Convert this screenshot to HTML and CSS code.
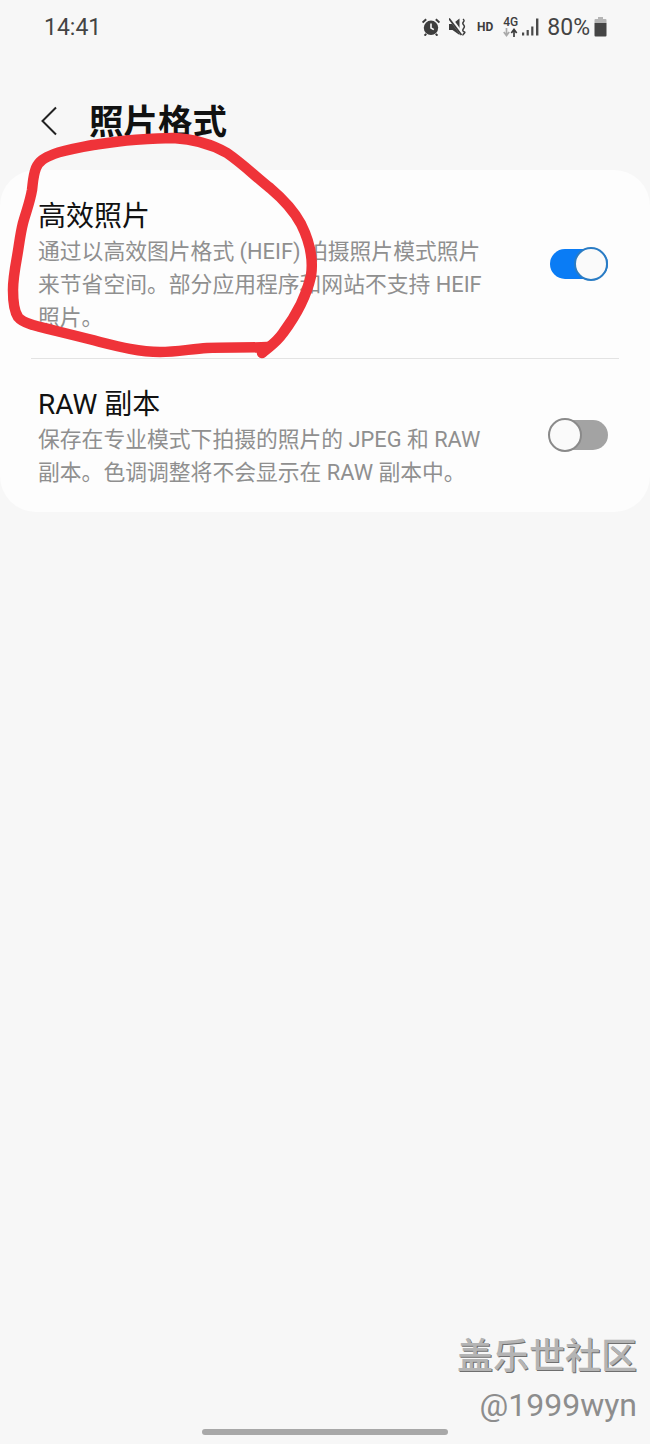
FILE: index.html
```html
<!DOCTYPE html>
<html lang="zh-CN">

<head>
    <meta charset="UTF-8">
    <meta name="viewport" content="width=device-width, initial-scale=1.0">
    <title>照片格式</title>
    <link rel="stylesheet" href="styles.css">
</head>

<body>
    <div class="page">
        <!-- status bar -->
        <div class="status-bar">
            <span class="time">14:41</span>
            <div class="status-icons">
                <svg class="ic-alarm" width="18" height="18" viewBox="0 0 18 18">
                    <circle cx="9" cy="9.8" r="7.200" fill="#3d3d3d"/>
                    <path d="M9 5.500v4.500l2.800 1.600" fill="none" stroke="#f7f7f7" stroke-width="1.600"/>
                    <path d="M.6 4.600 4.200 1.200M17.400 4.600 13.800 1.200M4.200 15.800l-1.600 1.900M13.800 15.800l1.600 1.900" stroke="#3d3d3d" stroke-width="2" fill="none"/>
                </svg>
                <svg class="ic-mute" width="18" height="18" viewBox="0 0 18 18">
                    <path d="M0 6h3.500L10.500 .5v16.500L3.500 12H0z" fill="#3d3d3d"/>
                    <path d="M1 0 13 16" stroke="#f7f7f7" stroke-width="3.600"/>
                    <path d="M0 .5 12.500 17" stroke="#3d3d3d" stroke-width="1.800"/>
                    <path d="M14 1c3 2.500-1.500 3 0 5s2 2.500 .5 4.500-.5 3 1 3.500-2 2-1.500 3.500" fill="none" stroke="#3d3d3d" stroke-width="1.500"/>
                </svg>
                <span class="hd">HD</span>
                <div class="net">
                    <span class="net-label">4G</span>
                    <svg width="15" height="9" viewBox="0 0 15 9">
                        <path d="M3.500 0v6M.8 4l2.700 3.500L6.200 4" fill="none" stroke="#aaa" stroke-width="1.700"/>
                        <path d="M11 9V2.500M8.300 5 11 1.500 13.700 5" fill="none" stroke="#3d3d3d" stroke-width="1.700"/>
                    </svg>
                </div>
                <svg class="ic-signal" width="17" height="18" viewBox="0 0 17 18">
                    <path d="M0 14.500h2.200v3H0zM4.600 12h2.200v5.500H4.600zM9.200 8.500h2.200v9H9.200zM14 .5h2.400v17H14z" fill="#4a4a4a"/>
                </svg>
                <span class="pct">80%</span>
                <svg width="13" height="20" viewBox="0 0 13 20">
                    <path d="M4 0h5v2H4z" fill="#b5b5b5"/>
                    <path d="M1.500 2h10a1 1 0 0 1 1 1v3H.5V3a1 1 0 0 1 1-1z" fill="#b5b5b5"/>
                    <path d="M.5 6h12v12.500a1 1 0 0 1-1 1h-10a1 1 0 0 1-1-1z" fill="#454545"/>
                </svg>
            </div>
        </div>

        <div class="header">
            <svg class="back" width="16" height="30" viewBox="0 0 16 30">
                <path d="M15 1.500 1.500 15 15 28.500" fill="none" stroke="#222" stroke-width="2"/>
            </svg>
            <h1 class="title">照片格式</h1>
        </div>

        <div class="card">
            <div class="row row-first">
                <div class="row-text">
                    <h2 class="row-title">高效照片</h2>
                    <p class="row-desc">通过以高效图片格式 (HEIF) 拍摄照片模式照片来节省空间。部分应用程序和网站不支持 HEIF 照片。</p>
                </div>
                <span class="toggle on"><span class="thumb"></span></span>
            </div>
            <div class="divider"></div>
            <div class="row row-second">
                <div class="row-text">
                    <h2 class="row-title">RAW 副本</h2>
                    <p class="row-desc">保存在专业模式下拍摄的照片的 JPEG 和 RAW 副本。色调调整将不会显示在 RAW 副本中。</p>
                </div>
                <span class="toggle off"><span class="thumb"></span></span>
            </div>
        </div>

        <div class="bottom">
            <div class="watermark">
                <div class="wm-name">盖乐世社区</div>
                <div class="wm-user">@1999wyn</div>
            </div>
            <div class="home-bar"></div>
        </div>

        <!-- red marker scribble drawn over the screenshot -->
        <svg class="scribble" width="650" height="400" viewBox="0 0 650 400">
            <path d="M262 353C270 346 276 343 283 333C295 317 306 298 311 276C314 256 309 240 301 224C293 209 283 199 270 188C256 177 243 164 227 153C213 145 195 139 173 138C160 138 147 139 133 140C120 141 107 143 93 145C78 148 64 150 54 154C44 158 39 161 36 168C33 176 33 182 32 190C30 202 26 212 23 223C20 235 19 246 17 257C15 268 13 279 13 290C13 302 14 311 18 317C22 322 27 323 33 325C55 331 78 336 100 342C120 347 140 352 160 352C176 352 191 349 207 348C225 347 247 348 267 347" fill="none" stroke="#ef3339" stroke-width="10.500" stroke-linecap="round" stroke-linejoin="round"/>
        </svg>
    </div>
</body>

</html>
```

FILE: styles.css
```css
* {
    box-sizing: border-box;
}

body {
    margin: 0;
    background-color: #f7f7f7;
    font-family: Roboto, "Noto Sans CJK SC", sans-serif;
}

.page {
    position: relative;
    display: flex;
    flex-direction: column;
    width: 650px;
    height: 1444px;
    overflow: hidden;
}

.status-bar {
    display: flex;
    justify-content: space-between;
    align-items: center;
    height: 54px;
    padding: 0 43px 0 44px;
}

.time {
    font-size: 23px;
    color: #444;
}

.status-icons {
    display: flex;
    align-items: center;
}

.ic-alarm {
    margin-right: 9px;
}

.ic-mute {
    margin-right: 10px;
}

.hd {
    margin-right: 10px;
    font-size: 12px;
    font-weight: 700;
    color: #3d3d3d;
}

.net {
    display: flex;
    flex-direction: column;
    align-items: center;
    margin-right: 4px;
    width: 15px;
}

.net-label {
    font-size: 12px;
    line-height: 11px;
    font-weight: 500;
    color: #3d3d3d;
}

.ic-signal {
    margin-right: 8px;
}

.pct {
    margin-right: 4px;
    font-size: 23px;
    color: #444;
}

.header {
    display: flex;
    align-items: center;
    height: 50px;
    margin-top: 42px;
    padding-left: 41px;
}

.title {
    margin: 1px 0 0 32px;
    font-size: 34.500px;
    line-height: 50px;
    font-weight: 700;
    color: #111;
}

.back {
    flex: none;
}

.card {
    margin-top: 24px;
    height: 342px;
    background-color: #fdfdfd;
    border-radius: 36px;
}

.row {
    display: flex;
    justify-content: space-between;
    align-items: center;
    padding: 0 42px 0 38px;
}

.row-first {
    height: 188px;
}

.row-second {
    height: 153px;
}

.row-text {
    width: 450px;
    padding-top: 5px;
}

.row-title {
    margin: 0;
    font-size: 28px;
    line-height: 36px;
    font-weight: 400;
    color: #111;
}

.row-desc {
    margin: 0;
    font-size: 21.800px;
    line-height: 33px;
    color: #8f8f8f;
}

.divider {
    height: 1px;
    margin: 0 31px;
    background-color: #e3e3e3;
}

.toggle {
    position: relative;
    flex: none;
    width: 58px;
    height: 30px;
    border-radius: 15px;
}

.toggle.on {
    background-color: #0a7cf5;
}

.toggle.off {
    margin-bottom: 2px;
    background-color: #a3a3a3;
}

.thumb {
    position: absolute;
    top: -2px;
    width: 34px;
    height: 34px;
    border-radius: 50%;
    background-color: #fafafa;
    border: 2px solid #2a7cc4;
}

.toggle.on .thumb {
    right: 0;
}

.toggle.off .thumb {
    left: -2px;
    border-color: #8a8a8a;
}

.bottom {
    display: flex;
    flex-direction: column;
    margin-top: auto;
}

.watermark {
    align-self: flex-end;
    padding-right: 13px;
    text-align: right;
}

.wm-name {
    font-size: 36px;
    line-height: 46px;
    font-weight: 500;
    color: #b4b4b4;
    text-shadow: 1px 1px 0 #6f6f6f;
}

.wm-user {
    margin-top: 2px;
    font-size: 32px;
    line-height: 46px;
    color: #8d8d8d;
}

.home-bar {
    align-self: center;
    width: 246px;
    height: 6px;
    margin: 1px 0 9px;
    border-radius: 3px;
    background-color: #a8a8a8;
}

.scribble {
    position: absolute;
    top: 0;
    left: 0;
}
```
